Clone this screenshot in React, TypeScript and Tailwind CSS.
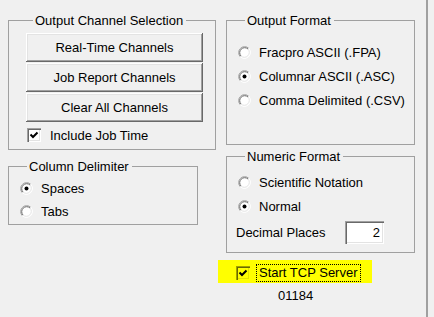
import React from "react";

function Radio({ checked }: { checked?: boolean }) {
  return (
    <svg width="13" height="13" viewBox="0 0 13 13" className="shrink-0">
      <circle cx="6.5" cy="6.5" r="6" fill="#ffffff" />
      <path d="M2.26 10.74 A6 6 0 0 1 10.74 2.26" stroke="#a0a0a0" strokeWidth="1" fill="none" />
      <path d="M10.74 2.26 A6 6 0 0 1 2.26 10.74" stroke="#ffffff" strokeWidth="1" fill="none" />
      <path d="M2.97 10.03 A5 5 0 0 1 10.03 2.97" stroke="#696969" strokeWidth="1" fill="none" />
      <path d="M10.03 2.97 A5 5 0 0 1 2.97 10.03" stroke="#e3e3e3" strokeWidth="1" fill="none" />
      {checked && <circle cx="6.5" cy="6.5" r="2" fill="#000000" />}
    </svg>
  );
}

function Check({ yellow }: { yellow?: boolean }) {
  return (
    <div
      className={
        yellow
          ? "w-[14px] h-[14px] shrink-0 bg-[#ffff00] shadow-[inset_1px_1px_#a0a000,inset_2px_2px_#696900,inset_-1px_-1px_#ffff00,inset_-2px_-2px_#e3e300] flex items-center justify-center"
          : "w-[14px] h-[14px] shrink-0 bg-white shadow-[inset_1px_1px_#a0a0a0,inset_2px_2px_#696969,inset_-1px_-1px_#ffffff,inset_-2px_-2px_#e3e3e3] flex items-center justify-center"
      }
    >
      <svg width="14" height="14" viewBox="0 0 14 14">
        <path d="M3.5 6.5 L6 9 L10.5 4.5" stroke="#000000" strokeWidth="2" fill="none" />
      </svg>
    </div>
  );
}

function Group({
  title,
  className,
  children,
}: {
  title: string;
  className: string;
  children: React.ReactNode;
}) {
  return (
    <fieldset className={"border border-[#a0a0a0] " + className}>
      <legend className="ml-[7px] pl-[2px] pr-[3px] leading-[17px]">{title}</legend>
      {children}
    </fieldset>
  );
}

function Btn({ label }: { label: string }) {
  return (
    <div className="w-[177px] h-[29px] flex items-center justify-center bg-[#f0f0f0] shadow-[inset_-1px_-1px_#696969,inset_1px_1px_#ffffff,inset_-2px_-2px_#a0a0a0,inset_2px_2px_#e3e3e3]">
      {label}
    </div>
  );
}

function RadioRow({ label, checked, h }: { label: string; checked?: boolean; h: string }) {
  return (
    <div className={"flex items-center " + h}>
      <Radio checked={checked} />
      <span className="ml-[8px]">{label}</span>
    </div>
  );
}

export default function App() {
  return (
    <div className="w-[434px] h-[317px] bg-[#f0f0f0] flex overflow-hidden text-[13px] leading-[15px] text-black font-['Liberation_Sans',Arial,sans-serif]">
      <div className="w-[426px] flex pl-[8px]">
        <div className="w-[208px] flex flex-col">
          <Group title="Output Channel Selection" className="w-[208px] mt-[12px] pl-[17px] pt-[4px] pb-[6px]">
            <div className="flex flex-col gap-[1px]">
              <Btn label="Real-Time Channels" />
              <Btn label="Job Report Channels" />
              <Btn label="Clear All Channels" />
            </div>
            <div className="mt-[5px] h-[16px] flex items-center pl-[1px]">
              <Check />
              <span className="ml-[9px]">Include Job Time</span>
            </div>
          </Group>
          <Group title="Column Delimiter" className="w-[190px] mt-[8px] pl-[11px] pt-[2px] pb-[1px]">
            <RadioRow label="Spaces" checked h="h-[23px]" />
            <RadioRow label="Tabs" h="h-[23px]" />
          </Group>
        </div>
        <div className="w-[189px] ml-[10px] flex flex-col">
          <Group title="Output Format" className="w-[189px] mt-[12px] pl-[11px] pt-[11px] pb-[32px]">
            <RadioRow label="Fracpro ASCII (.FPA)" h="h-[24px]" />
            <RadioRow label="Columnar ASCII (.ASC)" checked h="h-[24px]" />
            <RadioRow label="Comma Delimited (.CSV)" h="h-[24px]" />
          </Group>
          <Group title="Numeric Format" className="w-[189px] mt-[3px] pl-[11px] pt-[5px] pb-[8px]">
            <RadioRow label="Scientific Notation" h="h-[24px]" />
            <RadioRow label="Normal" checked h="h-[24px]" />
            <div className="mt-[3px] h-[23px] flex items-center -ml-[2px]">
              <span className="w-[109px]">Decimal Places</span>
              <div className="w-[39px] h-[23px] bg-white flex items-center justify-end pr-[4px] shadow-[inset_1px_1px_#a0a0a0,inset_2px_2px_#696969,inset_-1px_-1px_#ffffff,inset_-2px_-2px_#e3e3e3]">
                2
              </div>
            </div>
          </Group>
          <div className="-ml-[8px] mt-[7px] w-[154px] h-[23px] bg-[#ffff00] flex items-start pl-[18px] pt-[4px]">
            <div className="mt-[2px]">
              <Check yellow />
            </div>
            <span className="ml-[6px] h-[18px] border border-dotted border-black px-[2px] leading-[16px]">
              Start TCP Server
            </span>
          </div>
          <div className="ml-[52px] mt-[5px]">01184</div>
        </div>
      </div>
      <div className="w-[2px] h-full bg-[#a0a0a0]" />
    </div>
  );
}
